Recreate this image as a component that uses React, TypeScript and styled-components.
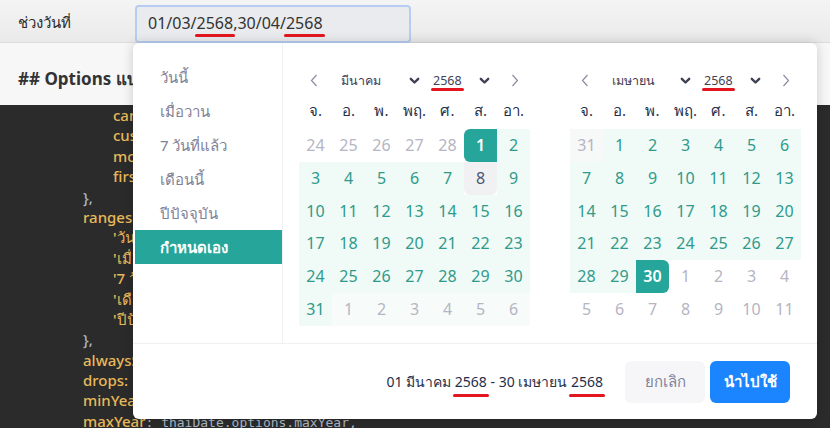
import React from 'react';
import styled, { createGlobalStyle, css } from 'styled-components';

const GlobalStyle = createGlobalStyle`
  html, body { margin: 0; padding: 0; }
  body {
    font-family: "Noto Sans", "Open Sans", sans-serif;
    background: #2b2b2b;
  }
  * { box-sizing: border-box; }
`;

const Page = styled.div`
  position: relative;
  width: 830px;
  height: 428px;
  overflow: hidden;
  display: flex;
  flex-direction: column;
  background: #2b2b2b;
`;

const FormRow = styled.div`
  height: 43px;
  flex: none;
  display: flex;
  align-items: flex-start;
  padding: 5px 0 0 18px;
  background: linear-gradient(#f5f4f5, #ebeaeb);
  border-bottom: 1px solid #dedcde;
`;

const Label = styled.div`
  width: 117px;
  line-height: 35px;
  font-size: 15px;
  color: #2b2b2b;
`;

const DateInput = styled.div`
  width: 276px;
  height: 38px;
  border: 2px solid #b6cdf2;
  border-radius: 4px;
  background: #e9ebee;
  padding: 0 0 0 11px;
  font-size: 16px;
  line-height: 33px;
  color: #333;
`;

const Mark = styled.span<{ $gap?: number }>`
  position: relative;
  &::after {
    content: '';
    position: absolute;
    left: -2px;
    right: -2px;
    bottom: ${(p) => -(p.$gap ?? 3)}px;
    height: 3px;
    border-radius: 2px;
    background: #e3161f;
  }
`;

const Section = styled.div`
  height: 64px;
  flex: none;
  background: #f8f7f8;
  padding: 24px 0 0 18px;
`;

const Heading = styled.h2`
  margin: 0;
  font-size: 17px;
  font-weight: 700;
  color: #333;
  line-height: 24px;
`;

const Code = styled.div`
  flex: 1;
  background: #2b2b2b;
  padding: 0 0 0 83px;
  margin-top: -2px;
`;

const CodeLine = styled.div<{ $indent?: boolean }>`
  height: 20.4px;
  line-height: 20.4px;
  font-size: 15px;
  font-weight: 500;
  white-space: nowrap;
  padding-left: ${(p) => (p.$indent ? 30 : 0)}px;
  color: #e8b95a;
`;

const Punct = styled.span`
  color: #a9b7c6;
`;

const Mono = styled.span`
  font-family: "DejaVu Sans Mono", "Liberation Mono", monospace;
  font-size: 13px;
  font-weight: 400;
  color: #a9b7c6;
`;

/* ---------- Picker ---------- */

const Picker = styled.div`
  position: absolute;
  left: 133px;
  top: 43px;
  width: 684px;
  height: 376px;
  background: #fff;
  border-radius: 6px;
  box-shadow: 0 0 12px rgba(0, 0, 0, 0.18);
  display: flex;
  flex-direction: column;
  overflow: hidden;
`;

const PickerBody = styled.div`
  display: flex;
  height: 300px;
  flex: none;
`;

const Sidebar = styled.ul`
  width: 150px;
  flex: none;
  margin: 0;
  padding: 17px 0 0 0;
  list-style: none;
  border-right: 1px solid #eff0f2;
`;

const RangeItem = styled.li<{ $active?: boolean }>`
  height: 34px;
  line-height: 34px;
  padding-left: 27px;
  font-size: 15px;
  color: #7e8299;
  ${(p) =>
    p.$active &&
    css`
      background: #26a69a;
      color: #fff;
      font-weight: 600;
      margin-left: 2px;
      padding-left: 25px;
    `}
`;

const Calendars = styled.div`
  display: flex;
  gap: 40px;
  padding: 22px 0 0 16px;
`;

const Calendar = styled.div`
  width: 231px;
`;

const NavRow = styled.div`
  height: 31px;
  display: grid;
  grid-template-columns: 30px 95px 75px 31px;
  align-items: center;
`;

const Arrow = styled.div`
  display: flex;
  justify-content: center;
  align-items: center;
`;

const Select = styled.div<{ $pad: number; $chev: number }>`
  display: flex;
  align-items: center;
  justify-content: space-between;
  padding: 0 ${(p) => p.$chev}px 0 ${(p) => p.$pad}px;
  font-size: 12.5px;
  color: #3f4254;
`;

const Grid = styled.div`
  display: grid;
  grid-template-columns: repeat(7, 1fr);
`;

const WeekDay = styled.div`
  height: 33px;
  line-height: 29px;
  text-align: center;
  font-size: 15px;
  color: #252f4a;
`;

type Kind = 'out' | 'range' | 'rangeOut' | 'rangeGray' | 'start' | 'end' | 'today';

const kindStyles: Record<Kind, ReturnType<typeof css>> = {
  out: css`
    color: #b5b5c3;
  `,
  range: css`
    background: #f0faf6;
    color: #2f9a8b;
  `,
  rangeOut: css`
    background: #f7fcfa;
    color: #b5b5c3;
  `,
  rangeGray: css`
    background: #f7f8f8;
    color: #b5b5c3;
  `,
  start: css`
    background: #26a69a;
    color: #fff;
    font-weight: 600;
    border-radius: 6px 0 0 6px;
  `,
  end: css`
    background: #26a69a;
    color: #fff;
    font-weight: 600;
    border-radius: 0 6px 6px 0;
  `,
  today: css`
    background: #f1f1f4;
    color: #4b5675;
    border-radius: 0 0 6px 6px;
  `,
};

const Day = styled.div<{ $kind: Kind }>`
  height: 32.8px;
  line-height: 32.8px;
  text-align: center;
  font-size: 16px;
  ${(p) => kindStyles[p.$kind]}
`;

const Footer = styled.div`
  flex: 1;
  border-top: 1px solid #eff0f2;
  display: flex;
  align-items: center;
  justify-content: flex-end;
  padding: 0 27px 0 0;
`;

const Summary = styled.div`
  font-size: 14px;
  color: #252f4a;
  margin-right: 17px;
`;

const Button = styled.button<{ $primary?: boolean }>`
  width: 80px;
  height: 42px;
  margin-left: 5px;
  border: none;
  border-radius: 6px;
  font-family: inherit;
  font-size: 15px;
  background: ${(p) => (p.$primary ? '#1b84ff' : '#f6f6f8')};
  color: ${(p) => (p.$primary ? '#fff' : '#7e8299')};
  font-weight: ${(p) => (p.$primary ? 700 : 400)};
`;

const Chevron = () => (
  <svg width="11" height="8" viewBox="0 0 11 8">
    <path d="M1.8 1.8 5.5 5.5 9.2 1.8" fill="none" stroke="#3f4254" strokeWidth="2.4" strokeLinecap="round" strokeLinejoin="round" />
  </svg>
);

const Prev = () => (
  <svg width="8" height="13" viewBox="0 0 8 13">
    <path d="M6.5 1 1.5 6.5 6.5 12" fill="none" stroke="#8a8ea3" strokeWidth="1.2" />
  </svg>
);

const Next = () => (
  <svg width="8" height="13" viewBox="0 0 8 13">
    <path d="M1.5 1 6.5 6.5 1.5 12" fill="none" stroke="#8a8ea3" strokeWidth="1.2" />
  </svg>
);

const weekdays = ['จ.', 'อ.', 'พ.', 'พฤ.', 'ศ.', 'ส.', 'อา.'];

type DayData = [number, Kind];

const range = (a: number, b: number, k: Kind): DayData[] =>
  Array.from({ length: b - a + 1 }, (_, i) => [a + i, k] as DayData);

const march: DayData[] = [
  ...range(24, 28, 'out'),
  [1, 'start'],
  ...range(2, 7, 'range'),
  [8, 'today'],
  ...range(9, 31, 'range'),
  ...range(1, 6, 'rangeOut'),
];

const april: DayData[] = [
  [31, 'rangeGray'],
  ...range(1, 29, 'range'),
  [30, 'end'],
  ...range(1, 11, 'out'),
];

const CalendarView = ({ month, days }: { month: string; days: DayData[] }) => (
  <Calendar>
    <NavRow>
      <Arrow>
        <Prev />
      </Arrow>
      <Select $pad={12} $chev={4}>
        <span>{month}</span>
        <Chevron />
      </Select>
      <Select $pad={9} $chev={9}>
        <Mark $gap={2}>2568</Mark>
        <Chevron />
      </Select>
      <Arrow>
        <Next />
      </Arrow>
    </NavRow>
    <Grid>
      {weekdays.map((w) => (
        <WeekDay key={w}>{w}</WeekDay>
      ))}
      {days.map(([d, k], i) => (
        <Day key={i} $kind={k}>
          {d}
        </Day>
      ))}
    </Grid>
  </Calendar>
);

const ranges = ['วันนี้', 'เมื่อวาน', '7 วันที่แล้ว', 'เดือนนี้', 'ปีปัจจุบัน', 'กำหนดเอง'];

export default function App() {
  return (
    <Page>
      <GlobalStyle />
      <FormRow>
        <Label>ช่วงวันที่</Label>
        <DateInput>
          01/03/<Mark>2568</Mark>,30/04/<Mark>2568</Mark>
        </DateInput>
      </FormRow>
      <Section>
        <Heading>## Options แบบกำหนดเอง</Heading>
      </Section>
      <Code>
        <CodeLine $indent>cancelLabel</CodeLine>
        <CodeLine $indent>customRangeLabel</CodeLine>
        <CodeLine $indent>monthNames</CodeLine>
        <CodeLine $indent>firstDay</CodeLine>
        <CodeLine>
          <Punct>{'},'}</Punct>
        </CodeLine>
        <CodeLine>ranges:</CodeLine>
        <CodeLine $indent>'วันนี้'</CodeLine>
        <CodeLine $indent>'เมื่อวาน'</CodeLine>
        <CodeLine $indent>'7 วันที่แล้ว'</CodeLine>
        <CodeLine $indent>'เดือนนี้'</CodeLine>
        <CodeLine $indent>'ปีปัจจุบัน'</CodeLine>
        <CodeLine>
          <Punct>{'},'}</Punct>
        </CodeLine>
        <CodeLine>alwaysShowCalendars</CodeLine>
        <CodeLine>drops:</CodeLine>
        <CodeLine>minYear</CodeLine>
        <CodeLine>
          maxYear<Mono>: thaiDate.options.maxYear,</Mono>
        </CodeLine>
      </Code>
      <Picker>
        <PickerBody>
          <Sidebar>
            {ranges.map((r, i) => (
              <RangeItem key={r} $active={i === ranges.length - 1}>
                {r}
              </RangeItem>
            ))}
          </Sidebar>
          <Calendars>
            <CalendarView month="มีนาคม" days={march} />
            <CalendarView month="เมษายน" days={april} />
          </Calendars>
        </PickerBody>
        <Footer>
          <Summary>
            01 มีนาคม <Mark $gap={6}>2568</Mark> - 30 เมษายน <Mark $gap={6}>2568</Mark>
          </Summary>
          <Button>ยกเลิก</Button>
          <Button $primary>นำไปใช้</Button>
        </Footer>
      </Picker>
    </Page>
  );
}
